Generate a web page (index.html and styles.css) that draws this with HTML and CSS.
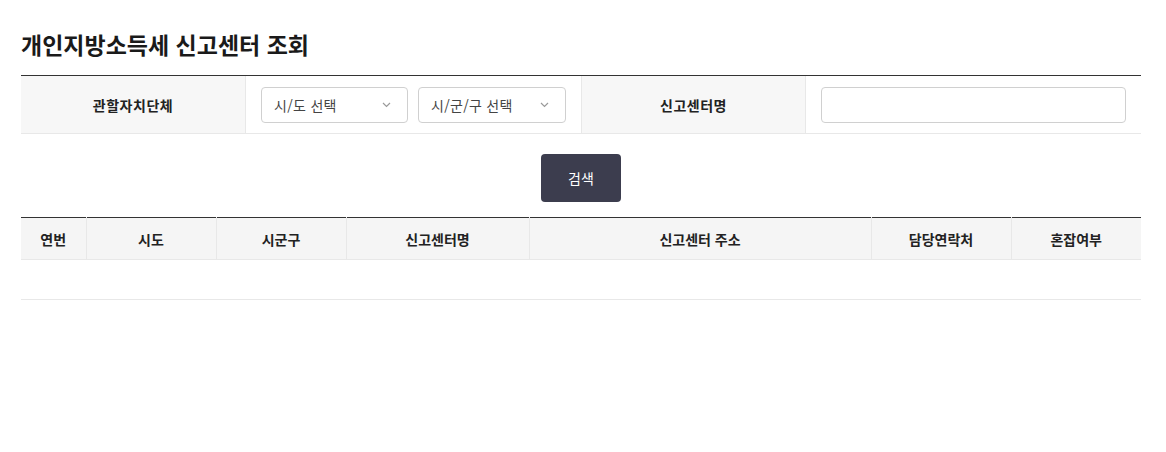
FILE: index.html
```html
<!DOCTYPE html>
<html lang="ko">
<head>
    <meta charset="UTF-8">
    <meta name="viewport" content="width=device-width, initial-scale=1.0">
    <title>개인지방소득세 신고센터 조회</title>
    <link rel="stylesheet" href="styles.css">
</head>
<body>
    <div class="container">
        <h1>개인지방소득세 신고센터 조회</h1>

        <div class="search-box">
            <div class="label-cell">관할자치단체</div>
            <div class="field-cell">
                <div class="select">
                    <span>시/도 선택</span>
                    <svg class="chev" width="9" height="6" viewBox="0 0 9 6"><path d="M1 1l3.5 3.5L8 1" fill="none" stroke="#9a9a9a" stroke-width="1.2"/></svg>
                </div>
                <div class="select">
                    <span>시/군/구 선택</span>
                    <svg class="chev" width="9" height="6" viewBox="0 0 9 6"><path d="M1 1l3.5 3.5L8 1" fill="none" stroke="#9a9a9a" stroke-width="1.2"/></svg>
                </div>
            </div>
            <div class="label-cell">신고센터명</div>
            <div class="field-cell last">
                <input type="text" class="text-input">
            </div>
        </div>

        <div class="btn-area">
            <button type="button" class="search-btn">검색</button>
        </div>

        <table class="result-table">
            <colgroup>
                <col style="width:65px">
                <col style="width:130px">
                <col style="width:130px">
                <col style="width:183px">
                <col style="width:342px">
                <col style="width:140px">
                <col style="width:130px">
            </colgroup>
            <thead>
                <tr>
                    <th>연번</th>
                    <th>시도</th>
                    <th>시군구</th>
                    <th>신고센터명</th>
                    <th>신고센터 주소</th>
                    <th>담당연락처</th>
                    <th>혼잡여부</th>
                </tr>
            </thead>
            <tbody>
                <tr>
                    <td colspan="7"></td>
                </tr>
            </tbody>
        </table>
    </div>
</body>
</html>
```

FILE: styles.css
```css
* {
    box-sizing: border-box;
}

body {
    margin: 0;
    font-family: 'Noto Sans CJK KR', 'Noto Sans', sans-serif;
    color: #222;
    background: #fff;
}

.container {
    width: 1120px;
    margin: 0 21px;
}

h1 {
    margin: 28px 0 15px;
    font-size: 23px;
    line-height: 32px;
    font-weight: 700;
    color: #1a1a1a;
}

.search-box {
    display: grid;
    grid-template-columns: 225px 336px 224px 1fr;
    border-top: 1px solid #333;
    border-bottom: 1px solid #e8e8e8;
}

.label-cell {
    height: 57px;
    display: flex;
    align-items: center;
    justify-content: center;
    background: #f7f7f7;
    border-right: 1px solid #e8e8e8;
    font-size: 14px;
    font-weight: 700;
    letter-spacing: 0.5px;
    color: #222;
}

.field-cell {
    display: flex;
    align-items: center;
    gap: 10px;
    padding: 0 15px;
    border-right: 1px solid #e8e8e8;
}

.field-cell.last {
    border-right: none;
}

.select {
    width: 147px;
    height: 36px;
    display: flex;
    align-items: center;
    justify-content: space-between;
    padding: 0 16px 0 12px;
    border: 1px solid #d0d0d0;
    border-radius: 4px;
    font-size: 14px;
    letter-spacing: 0.3px;
    color: #444;
}

.select + .select {
    width: 148px;
}

.chev {
    display: block;
}

.text-input {
    width: 100%;
    height: 36px;
    border: 1px solid #d0d0d0;
    border-radius: 4px;
    padding: 0 12px;
    font-size: 14px;
    outline: none;
}

.btn-area {
    display: flex;
    justify-content: center;
    padding: 20px 0 15px;
}

.search-btn {
    width: 80px;
    height: 48px;
    border: none;
    border-radius: 4px;
    background: #3c3d4e;
    color: #fff;
    font-family: inherit;
    font-size: 14px;
    cursor: pointer;
}

.result-table {
    width: 100%;
    border-collapse: collapse;
    table-layout: fixed;
    border-top: 1px solid #333;
}

.result-table th {
    height: 42px;
    background: #f5f5f5;
    font-size: 14px;
    font-weight: 700;
    color: #222;
    border-right: 1px solid #e8e8e8;
    border-bottom: 1px solid #e8e8e8;
    padding: 0;
}

.result-table th:last-child {
    border-right: none;
}

.result-table td {
    height: 40px;
    border-bottom: 1px solid #e8e8e8;
}
```
